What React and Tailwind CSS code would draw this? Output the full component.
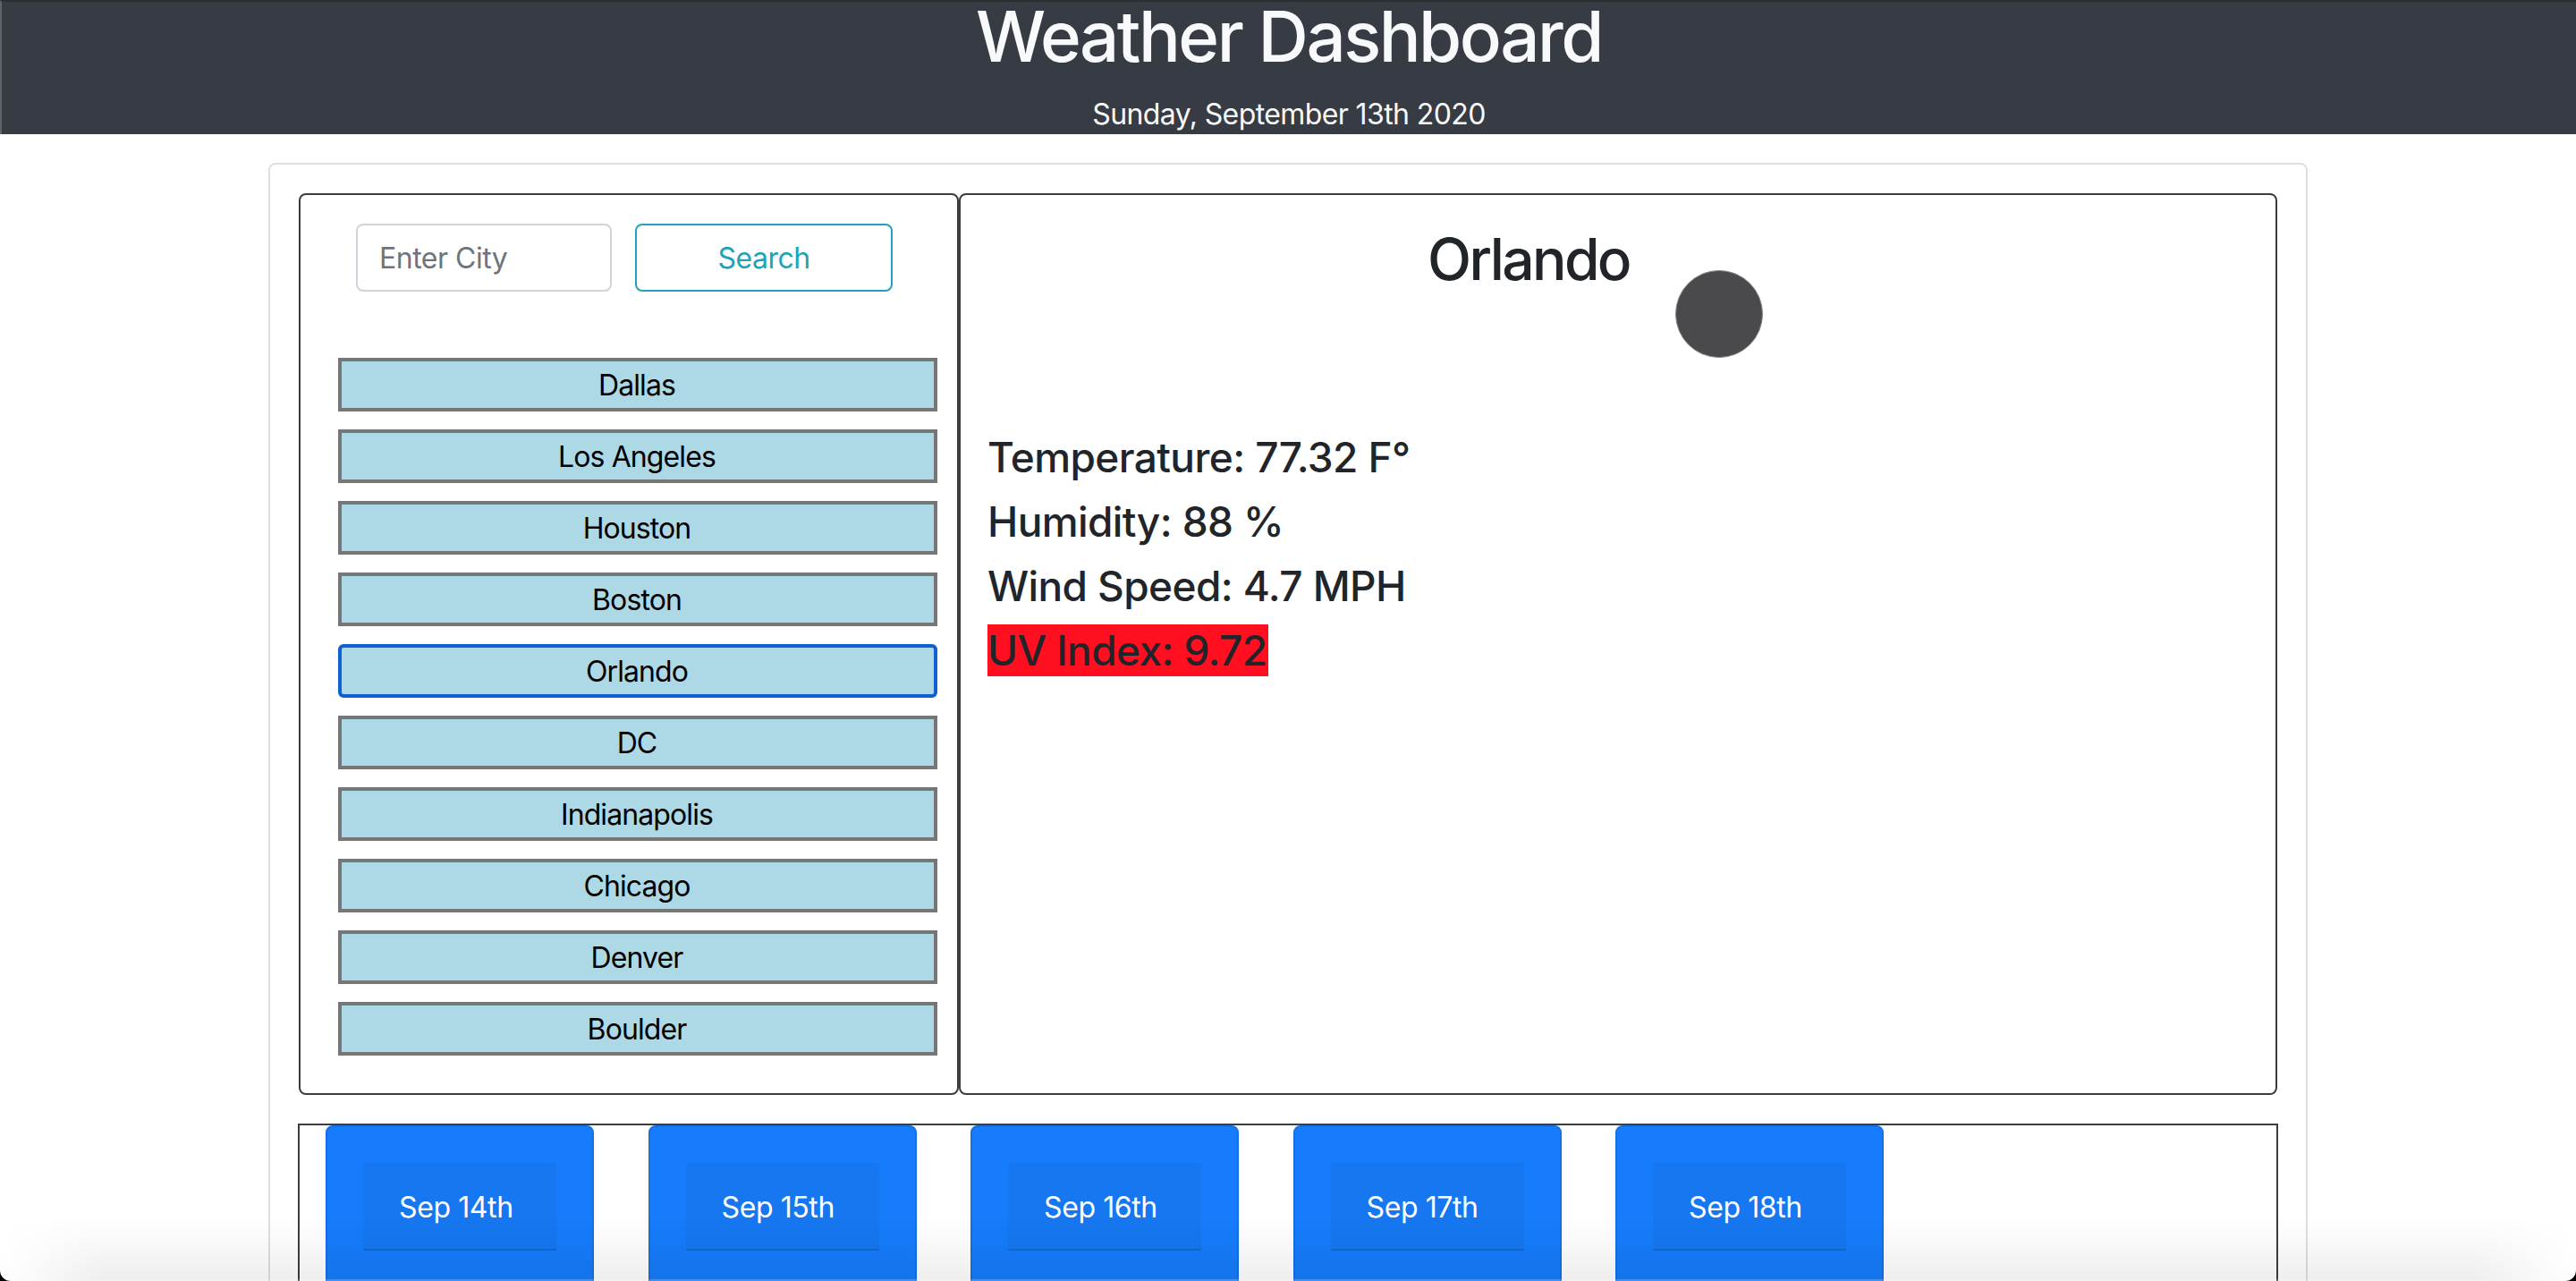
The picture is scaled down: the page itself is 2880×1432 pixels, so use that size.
const cities = ["Dallas", "Los Angeles", "Houston", "Boston", "Orlando", "DC", "Indianapolis", "Chicago", "Denver", "Boulder"];
const forecast = ["Sep 14th", "Sep 15th", "Sep 16th", "Sep 17th", "Sep 18th"];
const stats = ["Temperature: 77.32 F°", "Humidity: 88 %", "Wind Speed: 4.7 MPH"];

export default function App() {
  return (
    <div className="relative h-[1432px] overflow-hidden bg-white font-['Inter','Liberation_Sans',sans-serif] text-[32px] text-[#212529]">
      <header className="h-[150px] overflow-hidden border-t-2 border-l-2 border-t-[#2d2e30] border-l-[#5f6368] bg-[#373b43] text-center text-[#f8f9fa]">
        <h1 className="text-[78px] leading-[78px] font-medium tracking-[-2.5px]">Weather Dashboard</h1>
        <p className="mt-[26px] leading-[44px] tracking-[-0.6px]">Sunday, September 13th 2020</p>
      </header>

      <main className="mx-auto mt-[32px] w-[2280px] rounded-lg border-2 border-[#dfdfdf] p-[32px]">
        <div className="flex h-[1008px]">
          <section className="w-[738px] shrink-0 rounded-lg border-2 border-[#3a3d42] pt-[32px]">
            <div className="ml-[62px] flex gap-[26px]">
              <input
                placeholder="Enter City"
                className="h-[76px] w-[286px] rounded-lg border-2 border-[#ced4da] px-[24px] tracking-[-0.5px] outline-none placeholder:text-[#6c757d]"
              />
              <button className="h-[76px] w-[288px] rounded-lg border-2 border-[#22a2b8] pt-[2px] tracking-[-0.5px] text-[#22a2b8]">Search</button>
            </div>
            <div className="mt-[74px] ml-[42px] flex w-[670px] flex-col gap-[20px]">
              {cities.map((city) =>
                city === "Orlando" ? (
                  <button key={city} className="h-[60px] rounded-md border-4 border-[#1160cf] bg-[#add8e6] pt-[2px] pr-[2px] leading-none tracking-[-0.9px] text-black">
                    {city}
                  </button>
                ) : (
                  <button key={city} className="h-[60px] border-4 border-[#767676] bg-[#add8e6] pt-[2px] pr-[2px] leading-none tracking-[-0.9px] text-black">
                    {city}
                  </button>
                )
              )}
            </div>
          </section>

          <section className="flex-1 rounded-lg border-2 border-[#3a3d42] px-[30px] pt-[33px]">
            <div className="flex justify-center">
              <h2 className="text-[64px] leading-[77px] font-medium tracking-[-2.6px]">Orlando</h2>
              <div className="flex h-[200px] w-[200px] items-center justify-center">
                <div className="h-[98px] w-[98px] rounded-full border border-[#8a8a8c] bg-[#4a4a4c]" />
              </div>
            </div>
            <div className="mt-[31px] flex flex-col gap-[14px] text-[46px] leading-[58px] font-medium tracking-[-0.6px]">
              {stats.map((stat) => (
                <p key={stat}>{stat}</p>
              ))}
              <p className="w-[314px] bg-[#ff0f1f] whitespace-nowrap">UV Index: 9.72</p>
            </div>
          </section>
        </div>

        <div className="-mx-[1px] mt-[32px] flex h-[300px] gap-[60.5px] border-2 border-[#3a3d42] pl-[29px]">
          {forecast.map((day) => (
            <div key={day} className="h-[300px] w-[300px] rounded-lg border-2 border-[#1570e4] bg-[#167cfb] p-[40px] text-white">
              <div className="h-[98px] border-b-2 border-[#1268d2] bg-[#1677f0] px-[40px] pt-[26px] leading-[48px] tracking-[-0.4px]">{day}</div>
            </div>
          ))}
        </div>
      </main>

      {/* window shadow along the bottom edge of the capture */}
      <div className="pointer-events-none absolute inset-x-0 bottom-0 h-[70px] bg-[linear-gradient(180deg,rgba(0,0,0,0),rgba(0,0,0,0.065))] [mask-image:linear-gradient(90deg,transparent,black_110px,black_calc(100%-110px),transparent)]" />
      <div className="pointer-events-none absolute inset-x-0 bottom-0 h-[2px] bg-white/20" />
      <div className="pointer-events-none absolute inset-0 rounded-b-[12px] shadow-[0_0_0_20px_#000]" />
    </div>
  );
}
